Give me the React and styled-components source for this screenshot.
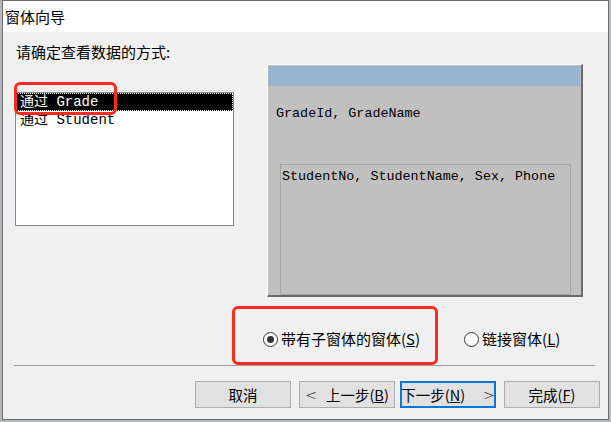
import React from 'react';
import styled, { createGlobalStyle } from 'styled-components';

const GlobalStyle = createGlobalStyle`
  html, body { margin: 0; padding: 0; }
  body {
    background: #b4b8bd;
    width: 611px;
    height: 422px;
    overflow: hidden;
    font-family: "Noto Sans CJK SC", "Noto Sans", sans-serif;
    color: #000;
  }
`;

const SANS = `"Noto Sans CJK SC", "Noto Sans", sans-serif`;
const MONO = `"Liberation Mono", "Noto Sans CJK SC", monospace`;

const Window = styled.div`
  position: relative;
  box-sizing: border-box;
  margin-left: 2px;
  width: 607px;
  height: 420px;
  border: 1px solid #6e6e6e;
  background: #f0f0f0;
  display: flex;
  flex-direction: column;
`;

const TitleBar = styled.div`
  height: 31px;
  flex: none;
  background: #fff;
  display: flex;
  align-items: center;
  padding-left: 2px;
  font-family: ${SANS};
  font-size: 15px;
  line-height: 20px;
`;

const Body = styled.div`
  flex: 1;
  display: flex;
  flex-direction: column;
`;

const TopSection = styled.div`
  display: flex;
  align-items: flex-start;
  gap: 33px;
  padding-left: 12px;
`;

const LeftColumn = styled.div`
  display: flex;
  flex-direction: column;
  width: 219px;
`;

const Prompt = styled.div`
  margin-top: 10px;
  padding-left: 1px;
  font-family: ${SANS};
  font-size: 15px;
  line-height: 20px;
  white-space: nowrap;
`;

const ListBox = styled.div`
  margin-top: 30px;
  box-sizing: border-box;
  height: 134px;
  border: 1px solid #828790;
  background: #fff;
  display: flex;
  flex-direction: column;
`;

const ListItem = styled.div`
  box-sizing: border-box;
  height: 18px;
  padding-left: 3px;
  border: 1px dotted ${p => (p.$selected ? '#ffffff' : 'transparent')};
  background: ${p => (p.$selected ? '#000' : 'transparent')};
  color: ${p => (p.$selected ? '#fff' : '#000')};
  font-family: ${MONO};
  font-size: 14px;
  line-height: 17px;
  white-space: pre;
`;

const Preview = styled.div`
  margin-top: 32px;
  box-sizing: border-box;
  width: 316px;
  height: 233px;
  background: #c0c0c0;
  border-top: 1px solid #ffffff;
  border-left: 1px solid #ffffff;
  border-right: 2px solid #6a6a6a;
  border-bottom: 2px solid #6a6a6a;
  padding: 1px 1px 0 0;
  display: flex;
  flex-direction: column;
`;

const CaptionBar = styled.div`
  height: 20px;
  background: #99b4d1;
`;

const FieldText = styled.div`
  margin-top: ${p => p.$top || 0}px;
  padding-left: ${p => p.$left || 0}px;
  font-family: ${MONO};
  font-size: 13.4px;
  line-height: 16px;
  white-space: pre;
`;

const SubForm = styled.div`
  margin: 42px 0 0 12px;
  box-sizing: border-box;
  width: 291px;
  height: 131px;
  border: 1px solid #a6a6a6;
  padding: 4px 0 0 1px;
`;

const RadioRow = styled.div`
  margin-top: 32px;
  height: 20px;
  padding-left: 260px;
  display: flex;
  align-items: center;
  gap: 44px;
`;

const RadioOption = styled.label`
  display: flex;
  align-items: center;
  gap: 3px;
  font-family: ${SANS};
  font-size: 15px;
  line-height: 20px;
  white-space: nowrap;
`;

const RadioCircle = styled.span`
  box-sizing: border-box;
  width: 15px;
  height: 15px;
  border-radius: 50%;
  border: 1px solid #333;
  background: #fff;
  display: grid;
  place-items: center;
  &::after {
    content: '';
    width: 7px;
    height: 7px;
    border-radius: 50%;
    background: ${p => (p.$checked ? '#333' : 'transparent')};
  }
`;

const Separator = styled.div`
  margin: 16px 13px 0 11px;
  height: 1px;
  background: #a0a0a0;
`;

const ButtonRow = styled.div`
  margin-top: 15px;
  padding-right: 8px;
  display: flex;
  justify-content: flex-end;
  gap: 8px;
`;

const NavGroup = styled.div`
  display: flex;
  gap: 5px;
`;

const Button = styled.button`
  box-sizing: border-box;
  width: 96px;
  height: 27px;
  margin: 0;
  padding: 0;
  background: #e1e1e1;
  border: ${p => (p.$focused ? '2px solid #0078d7' : '1px solid #adadad')};
  display: flex;
  align-items: center;
  justify-content: center;
  gap: ${p => p.$gap || 0}px;
  font-family: ${SANS};
  font-size: 14.5px;
  line-height: 20px;
  color: #000;
  white-space: nowrap;
`;

const Chevron = styled.span`
  font-family: "DejaVu Sans", sans-serif;
  font-size: 14px;
  font-weight: 300;
`;

const Annotation = styled.div`
  position: absolute;
  box-sizing: border-box;
  border: 3px solid #ff2a1f;
  border-radius: 6px;
  pointer-events: none;
`;

export default function App() {
  return (
    <>
      <GlobalStyle />
      <Window>
        <TitleBar>窗体向导</TitleBar>
        <Body>
          <TopSection>
            <LeftColumn>
              <Prompt>请确定查看数据的方式:</Prompt>
              <ListBox>
                <ListItem $selected>通过 Grade</ListItem>
                <ListItem>通过 Student</ListItem>
              </ListBox>
            </LeftColumn>
            <Preview>
              <CaptionBar />
              <FieldText $top={20} $left={8}>GradeId, GradeName</FieldText>
              <SubForm>
                <FieldText>StudentNo, StudentName, Sex, Phone</FieldText>
              </SubForm>
            </Preview>
          </TopSection>
          <RadioRow>
            <RadioOption>
              <RadioCircle $checked />
              <span>带有子窗体的窗体(<u>S</u>)</span>
            </RadioOption>
            <RadioOption>
              <RadioCircle />
              <span>链接窗体(<u>L</u>)</span>
            </RadioOption>
          </RadioRow>
          <Separator />
          <ButtonRow>
            <Button>取消</Button>
            <NavGroup>
              <Button $gap={9}>
                <Chevron>&lt;</Chevron>
                <span>上一步(<u>B</u>)</span>
              </Button>
              <Button $focused $gap={18}>
                <span>下一步(<u>N</u>)</span>
                <Chevron>&gt;</Chevron>
              </Button>
            </NavGroup>
            <Button>完成(<u>F</u>)</Button>
          </ButtonRow>
        </Body>
        <Annotation style={{ left: 11, top: 81, width: 103, height: 33 }} />
        <Annotation style={{ left: 229, top: 305, width: 206, height: 59 }} />
      </Window>
    </>
  );
}
